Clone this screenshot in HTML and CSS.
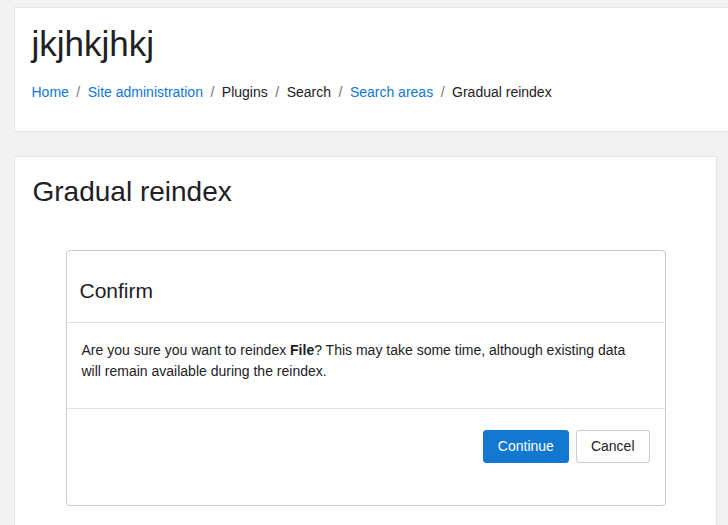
FILE: index.html
```html
<!DOCTYPE html>
<html lang="en">
<head>
<meta charset="utf-8">
<title>Gradual reindex</title>
<link rel="stylesheet" href="styles.css">
</head>
<body>
<div class="page">
  <header class="card page-header">
    <h1 class="site-title">jkjhkjhkj</h1>
    <nav aria-label="Navigation bar">
      <ol class="breadcrumb">
        <li><a href="#">Home</a></li>
        <li><a href="#">Site administration</a></li>
        <li>Plugins</li>
        <li>Search</li>
        <li><a href="#">Search areas</a></li>
        <li>Gradual reindex</li>
      </ol>
    </nav>
  </header>
  <section class="card main">
    <h2 class="page-title">Gradual reindex</h2>
    <div class="modal">
      <div class="modal-header"><h4 class="modal-title">Confirm</h4></div>
      <div class="modal-body">
        <p>Are you sure you want to reindex <b>File</b>? This may take some time, although existing data will remain available during the reindex.</p>
      </div>
      <div class="modal-footer">
        <button class="btn btn-primary" type="button">Continue</button>
        <button class="btn btn-secondary" type="button">Cancel</button>
      </div>
    </div>
  </section>
</div>
</body>
</html>
```
FILE: styles.css
```css
html, body {
  margin: 0;
  height: 100%;
  overflow: hidden;
}
body {
  background: #f2f2f2;
  font-family: "Liberation Sans", Arial, sans-serif;
  font-size: 14px;
  line-height: 1.5;
  color: #1d2125;
}
.page {
  padding: 7px 11px 0 14px;
}
.card {
  background: #fff;
  border: 1px solid #e4e4e4;
}
.page-header {
  margin-right: -30px;
  padding: 15px 17.5px 28px 16.5px;
}
.site-title {
  margin: 0;
  font-size: 35px;
  font-weight: 400;
  line-height: 1.2;
}
.breadcrumb {
  display: flex;
  list-style: none;
  margin: 17px 0 0;
  padding: 0;
  line-height: 21px;
}
.breadcrumb li + li::before {
  content: "/";
  padding: 0 7.5px;
  color: #6a737b;
}
.breadcrumb a {
  color: #1177d1;
  text-decoration: none;
}
.main {
  margin-top: 24px;
  padding: 17.5px;
  min-height: 420px;
}
.page-title {
  margin: 0 0 42px;
  font-size: 28px;
  font-weight: 400;
  line-height: 1.2;
}
.modal {
  width: 600px;
  box-sizing: border-box;
  margin: 0 auto;
  border: 1px solid #c9c9c9;
  border-radius: 4px;
}
.modal-header {
  padding: 27px 14px 19px 13px;
  border-bottom: 1px solid #dee2e6;
}
.modal-title {
  margin: 0;
  font-size: 21px;
  font-weight: 400;
  line-height: 1.2;
}
.modal-body {
  padding: 17px 20px 26px 15px;
  border-bottom: 1px solid #dee2e6;
}
.modal-body p {
  margin: 0;
}
.modal-footer {
  display: flex;
  justify-content: flex-end;
  gap: 7px;
  padding: 21px 15px 42px;
}
.btn {
  font: inherit;
  font-size: 14px;
  line-height: 21px;
  padding: 5px 14px;
  border: 1px solid transparent;
  border-radius: 3px;
  cursor: pointer;
}
.btn-primary {
  background: #1177d1;
  border-color: #1177d1;
  color: #fff;
}
.btn-secondary {
  background: #fff;
  border-color: #cccccc;
  color: #1d2125;
}
```
